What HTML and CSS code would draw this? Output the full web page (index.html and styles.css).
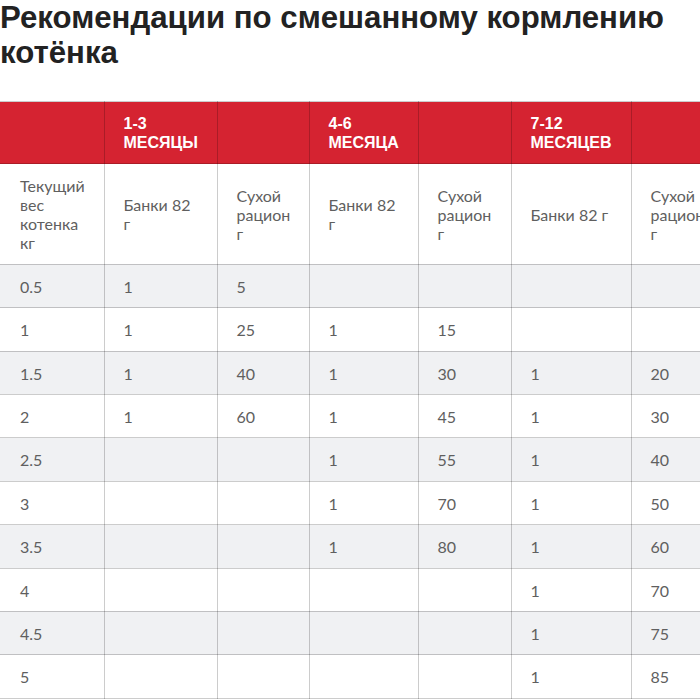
FILE: index.html
```html
<!DOCTYPE html>
<html lang="ru">
<head>
<meta charset="utf-8">
<title>Рекомендации по смешанному кормлению котёнка</title>
<link rel="stylesheet" href="styles.css">
</head>
<body>
<h1 class="title">Рекомендации по смешанному кормлению котёнка</h1>
<div class="table-wrap">
<table class="feed">
<colgroup>
<col class="c1"><col class="c2"><col class="c3"><col class="c4"><col class="c5"><col class="c6"><col class="c7">
</colgroup>
<thead>
<tr>
<th></th><th>1-3 месяцы</th><th></th><th>4-6 месяца</th><th></th><th>7-12 месяцев</th><th></th>
</tr>
</thead>
<tbody>
<tr class="sub">
<td>Текущий вес котенка кг</td><td>Банки 82 г</td><td>Сухой рацион г</td><td>Банки 82 г</td><td>Сухой рацион г</td><td>Банки 82 г</td><td>Сухой рацион г</td>
</tr>
<tr class="odd"><td>0.5</td><td>1</td><td>5</td><td></td><td></td><td></td><td></td></tr>
<tr><td>1</td><td>1</td><td>25</td><td>1</td><td>15</td><td></td><td></td></tr>
<tr class="odd"><td>1.5</td><td>1</td><td>40</td><td>1</td><td>30</td><td>1</td><td>20</td></tr>
<tr><td>2</td><td>1</td><td>60</td><td>1</td><td>45</td><td>1</td><td>30</td></tr>
<tr class="odd"><td>2.5</td><td></td><td></td><td>1</td><td>55</td><td>1</td><td>40</td></tr>
<tr><td>3</td><td></td><td></td><td>1</td><td>70</td><td>1</td><td>50</td></tr>
<tr class="odd"><td>3.5</td><td></td><td></td><td>1</td><td>80</td><td>1</td><td>60</td></tr>
<tr><td>4</td><td></td><td></td><td></td><td></td><td>1</td><td>70</td></tr>
<tr class="odd"><td>4.5</td><td></td><td></td><td></td><td></td><td>1</td><td>75</td></tr>
<tr><td>5</td><td></td><td></td><td></td><td></td><td>1</td><td>85</td></tr>
</tbody>
</table>
</div>
</body>
</html>
```

FILE: styles.css
```css
html, body {
  margin: 0;
  padding: 0;
  background: #ffffff;
  overflow: hidden;
}
body {
  width: 700px;
  height: 700px;
}
.title {
  margin: 0 0 31px 0;
  font-family: "Liberation Sans", Arial, sans-serif;
  font-weight: 700;
  font-size: 31.2px;
  line-height: 35px;
  color: #222222;
}
.table-wrap {
  width: 700px;
  overflow: hidden;
}
.feed {
  border-collapse: collapse;
  table-layout: fixed;
  width: 724px;
  font-family: Lato, "Open Sans", sans-serif;
  font-size: 16px;
  line-height: 19px;
  color: #5f5f5f;
}
.c1 { width: 104px; }
.c2 { width: 113px; }
.c3 { width: 92px; }
.c4 { width: 109px; }
.c5 { width: 93px; }
.c6 { width: 120px; }
.c7 { width: 93px; }
.feed th,
.feed td {
  border: 1px solid rgba(0, 0, 0, 0.2);
  padding: 12px 19px 11.4px 19px;
  text-align: left;
  vertical-align: middle;
}
.feed tr > :first-child {
  border-left: none;
  padding-left: 20px;
}
.feed th {
  background: #d52331;
  color: #ffffff;
  font-family: "Liberation Sans", Arial, sans-serif;
  font-weight: 700;
  font-size: 16px;
  text-transform: uppercase;
}
.feed .odd td {
  background: #f0f1f3;
}
```
